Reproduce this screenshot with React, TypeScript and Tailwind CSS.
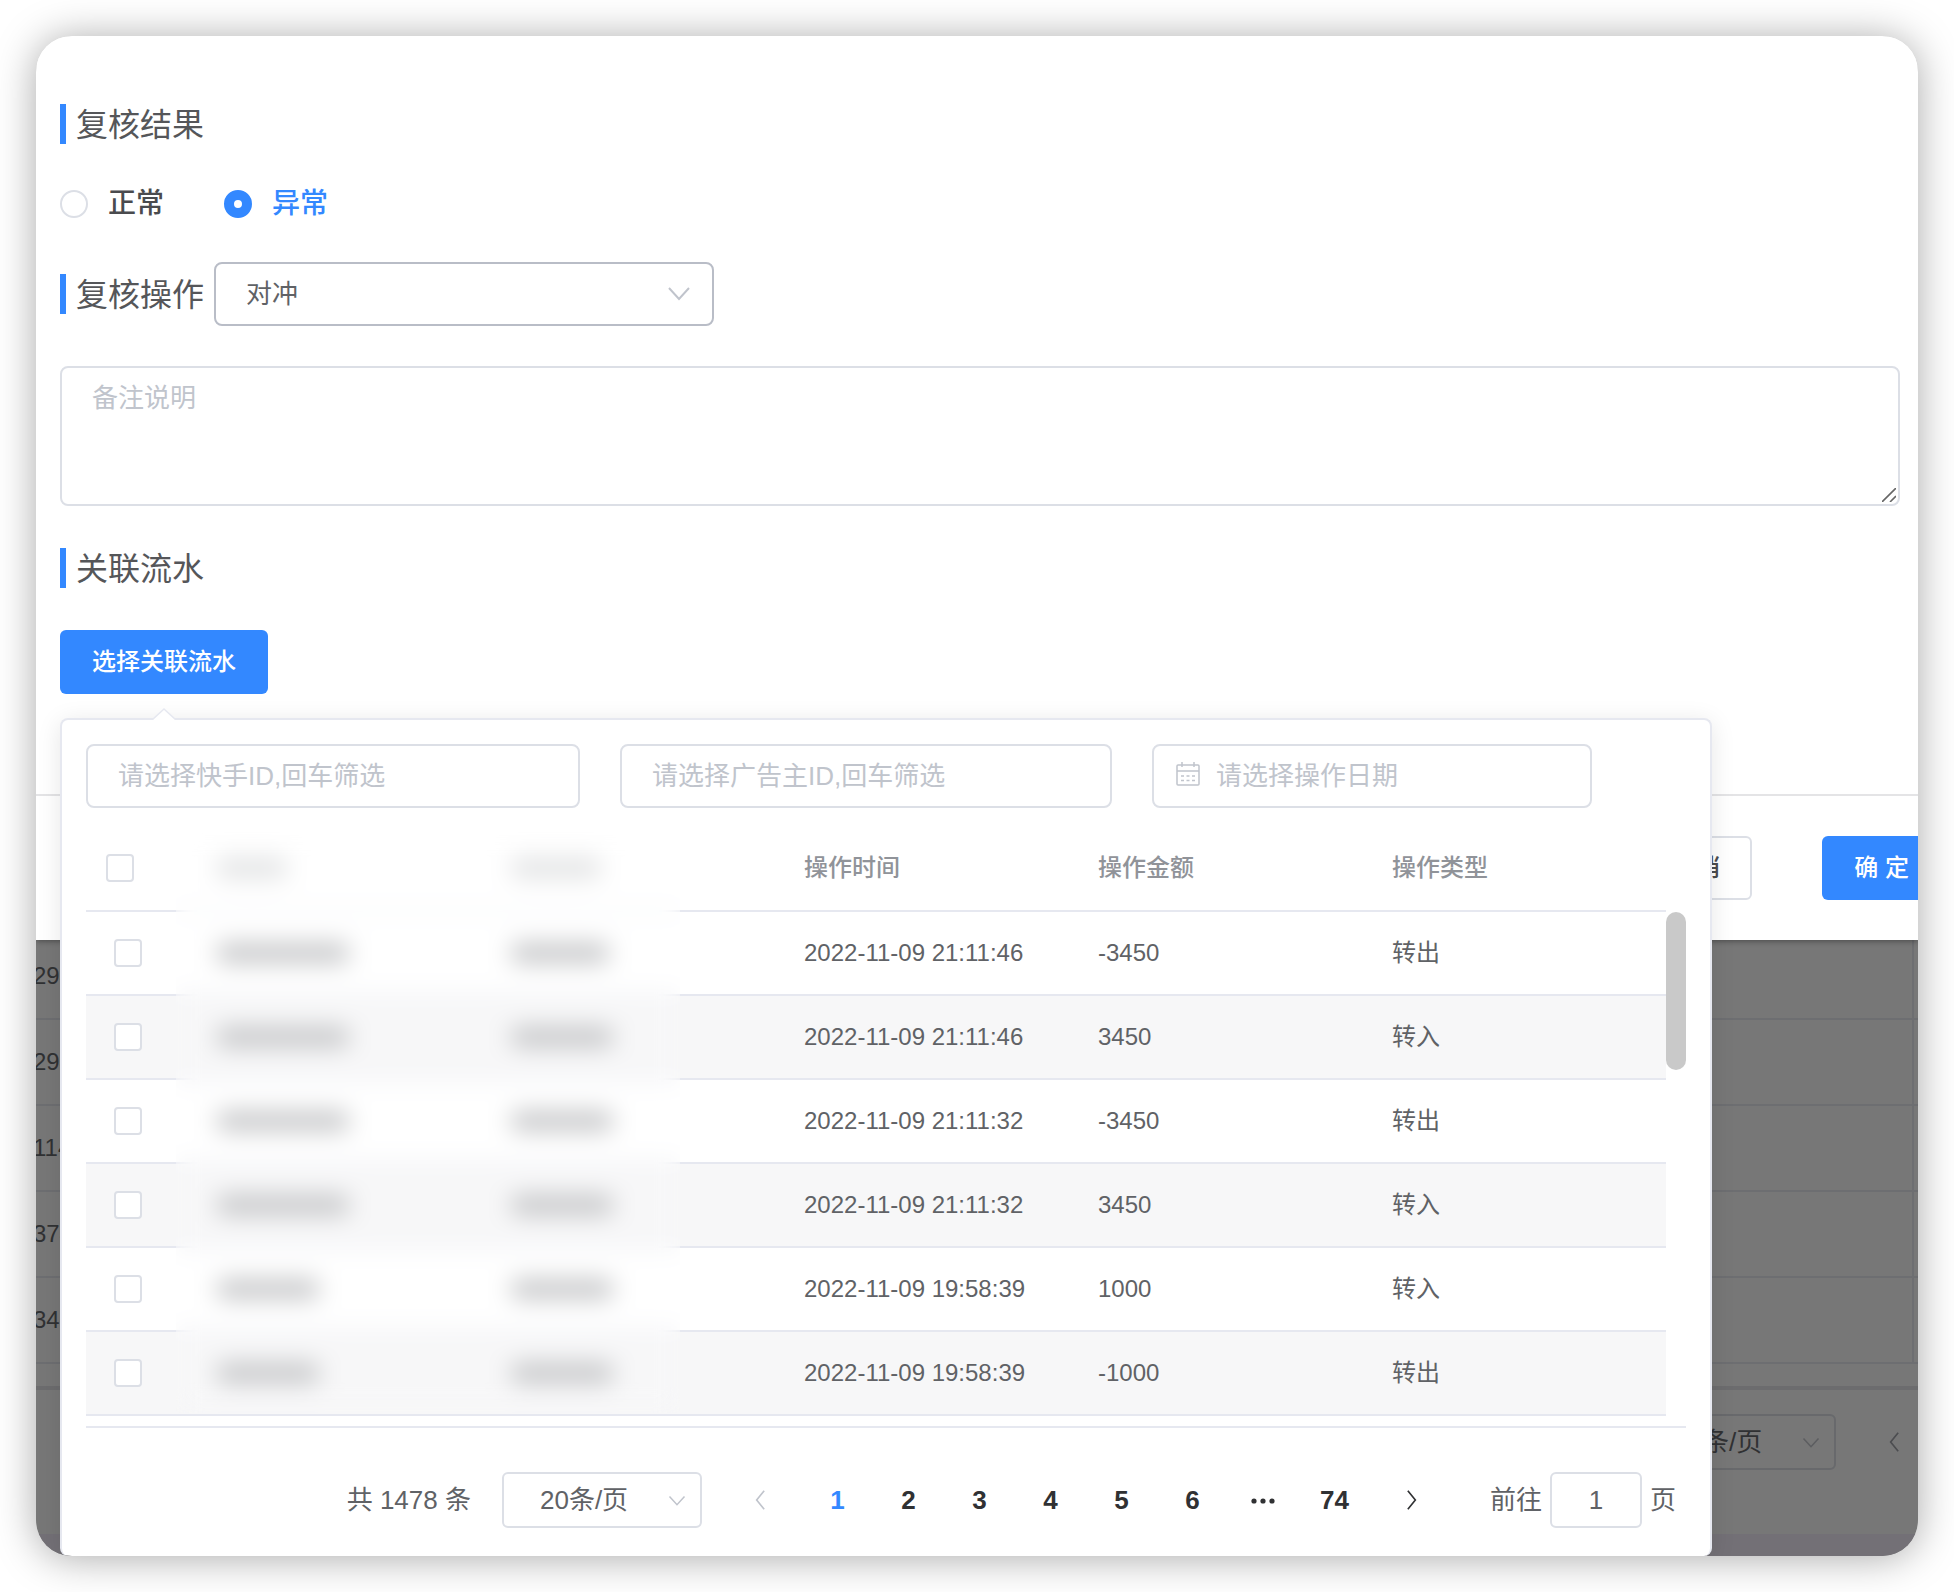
import React from "react";

type Flow = {
    time: string;
    amount: string;
    type: string;
    masks: string[];
};

const flows: Flow[] = [
    {time: "2022-11-09 21:11:46", amount: "-3450", type: "转出", masks: ["w-[134px]", "w-[100px]"]},
    {time: "2022-11-09 21:11:46", amount: "3450", type: "转入", masks: ["w-[134px]", "w-[104px]"]},
    {time: "2022-11-09 21:11:32", amount: "-3450", type: "转出", masks: ["w-[134px]", "w-[104px]"]},
    {time: "2022-11-09 21:11:32", amount: "3450", type: "转入", masks: ["w-[134px]", "w-[104px]"]},
    {time: "2022-11-09 19:58:39", amount: "1000", type: "转入", masks: ["w-[104px]", "w-[104px]"]},
    {time: "2022-11-09 19:58:39", amount: "-1000", type: "转出", masks: ["w-[104px]", "w-[104px]"]},
];

const pages = ["1", "2", "3", "4", "5", "6"];
const backRows = ["294", "294", "114", "374", "342"];

const Chevron = ({className, points}: { className: string; points: string }) => (
    <svg className={className} viewBox="0 0 24 24" fill="none" stroke="currentColor" strokeWidth="2">
        <polyline points={points}/>
    </svg>
);

const DOWN = "2,6 12,17 22,6";
const LEFT = "17,1 8,12 17,23";
const RIGHT = "7,1 16,12 7,23";

const SectionTitle = ({children}: { children: React.ReactNode }) => (
    <h2 className="flex h-10 items-center border-l-[6px] border-[#3388ff] pt-px pl-[10px] text-[32px] leading-10 whitespace-nowrap text-[#555659]">
        {children}
    </h2>
);

const RadioOption = ({label, checked}: { label: string; checked?: boolean }) => (
    <label className="flex h-7 items-center gap-5 text-[28px] font-medium text-[#4a4b4e] has-checked:text-[#3388ff]">
        <input
            type="radio"
            name="result"
            defaultChecked={checked}
            className="size-7 appearance-none rounded-full border-2 border-[#dcdfe6] bg-white checked:border-[10px] checked:border-[#3388ff]"
        />
        {label}
    </label>
);

const CheckBox = ({label}: { label: string }) => (
    <input
        type="checkbox"
        aria-label={label}
        className="block size-7 appearance-none rounded-[4px] border-2 border-[#dcdfe6] bg-white checked:bg-[#3388ff]"
    />
);

const CalendarIcon = () => (
    <svg className="pointer-events-none absolute top-[18px] left-6 size-6 text-[#c0c4cc]" viewBox="0 0 24 24" fill="none"
         stroke="currentColor" strokeWidth="1.5">
        <rect x="1" y="3" width="22" height="20" rx="1"/>
        <path d="M1 9h22M6 0v5M18 0v5"/>
        <path d="M5 14h3M10.500 14h3M16 14h3M5 18.500h3M10.500 18.500h3M16 18.500h3"/>
    </svg>
);

const ReviewForm = () => (
    <form className="relative bg-white shadow-[0_1px_6px_rgba(0,0,0,0.4)]">
        <div className="pt-[68px] pr-[18px] pb-[100px] pl-6">
            <SectionTitle>复核结果</SectionTitle>
            <div className="mt-[46px] flex gap-[60px]">
                <RadioOption label="正常"/>
                <RadioOption label="异常" checked/>
            </div>
            <div className="mt-11 flex items-center gap-[10px]">
                <SectionTitle>复核操作</SectionTitle>
                <div className="relative w-[500px]">
                    <select
                        aria-label="复核操作"
                        className="h-16 w-full appearance-none rounded-lg border-2 border-[#b9bdc7] bg-white px-[30px] text-[26px] text-[#606266]">
                        <option>对冲</option>
                    </select>
                    <Chevron className="pointer-events-none absolute top-5 right-[23px] size-6 text-[#c0c4cc]" points={DOWN}/>
                </div>
            </div>
            <div className="relative mt-10">
                <textarea
                    aria-label="备注说明"
                    placeholder="备注说明"
                    className="block h-[140px] w-full resize-none rounded-lg border-2 border-[#dcdfe6] px-[30px] py-[10px] text-[26px] leading-10 placeholder:text-[#c0c4cc]"
                />
                <svg className="pointer-events-none absolute right-1 bottom-1 size-[14px] text-[#666]" viewBox="0 0 14 14"
                     stroke="currentColor" strokeWidth="1.6">
                    <path d="M0 14L14 0M8 14L14 8"/>
                </svg>
            </div>
            <div className="mt-[42px]">
                <SectionTitle>关联流水</SectionTitle>
            </div>
            <button type="button" className="mt-[42px] block h-16 rounded-md bg-[#3388ff] px-8 text-2xl font-medium text-white">
                选择关联流水
            </button>
        </div>
        <div className="-mr-[23px] flex justify-end gap-[70px] border-t-2 border-[#e4e4e6] py-10">
            <button type="button" className="h-16 rounded-md border-2 border-[#dcdfe6] bg-white px-[30px] text-2xl font-medium text-[#4a4b4e]">
                取 消
            </button>
            <button type="submit" className="h-16 rounded-md bg-[#3388ff] px-8 text-2xl font-medium text-white">
                确 定
            </button>
        </div>
    </form>
);

/* list page under the modal mask */
const BackPage = () => (
    <div className="bg-[#777777] text-[#303133]">
        <div className="border-b-4 border-[#6c6c6e] pb-[22px]">
            <table className="-mt-[6px] w-full table-fixed border-separate border-spacing-0 text-2xl">
                <tbody>
                {backRows.map((id, i) => (
                    <tr key={i} className="h-[86px]">
                        <td className="border-r-2 border-b-2 border-[#6d6e71] p-0">
                            <span className="-ml-[3px]">{id}</span>
                        </td>
                        <td className="w-1 border-b-2 border-[#6d6e71] p-0"/>
                    </tr>
                ))}
                </tbody>
            </table>
        </div>
        <div className="flex items-center justify-end gap-12 pt-6 pr-[14px] pb-16">
            <div className="relative w-[200px]">
                <select
                    aria-label="每页条数"
                    className="h-14 w-full appearance-none rounded-md border-2 border-[#68696c] bg-transparent px-9 text-[26px]">
                    <option>20条/页</option>
                </select>
                <Chevron className="pointer-events-none absolute top-5 right-4 size-[18px] text-[#5c5d60]" points={DOWN}/>
            </div>
            <button type="button" aria-label="上一页">
                <Chevron className="size-5 text-[#4c4d50]" points={LEFT}/>
            </button>
        </div>
        <div className="h-[22px] bg-[#737076]"/>
    </div>
);

const Mask = ({className}: { className: string }) => (
    <div className={`h-5 rounded-full bg-[#c4c5c7] ${className}`}/>
);

const FlowTable = () => (
    <div className="mt-[18px] flex border-b-2 border-[#e6e8f0] pb-[10px]">
        <div className="relative flex-1">
            <table className="w-full table-fixed border-separate border-spacing-0 text-left text-2xl text-[#606266]">
                <thead>
                <tr className="h-[86px] text-[#909399] *:border-b-2 *:border-[#e6e8f0] *:py-0">
                    <th className="w-[110px] pl-5"><CheckBox label="全选"/></th>
                    <th className="px-5"><Mask className="w-[72px] opacity-50"/></th>
                    <th className="px-5"><Mask className="w-[92px] opacity-50"/></th>
                    <th className="px-5 font-medium">操作时间</th>
                    <th className="px-5 font-medium">操作金额</th>
                    <th className="px-5 font-medium">操作类型</th>
                </tr>
                </thead>
                <tbody>
                {flows.map((flow, i) => (
                    <tr key={i} className="h-[84px] *:border-b-2 *:border-[#e6e8f0] *:py-0 even:bg-[#f7f7f8]">
                        <td className="pl-7"><CheckBox label={`选择 ${flow.time}`}/></td>
                        {flow.masks.map((width, j) => (
                            <td key={j} className="px-5"><Mask className={width}/></td>
                        ))}
                        <td className="px-5 whitespace-nowrap">{flow.time}</td>
                        <td className="px-5">{flow.amount}</td>
                        <td className="px-5">{flow.type}</td>
                    </tr>
                ))}
                </tbody>
            </table>
            <div className="absolute top-0 bottom-[3px] left-[90px] w-[504px] backdrop-blur-[12px]"/>
        </div>
        <div className="w-5 pt-[86px]">
            <div className="h-[158px] rounded-full bg-[#c9c9c9]"/>
        </div>
    </div>
);

const Pagination = () => (
    <div className="mt-11 flex items-center justify-end pr-[10px] text-[26px] whitespace-nowrap text-[#606266]">
        <span>共 1478 条</span>
        <div className="relative ml-[31px] w-[200px]">
            <select
                aria-label="每页条数"
                className="h-14 w-full appearance-none rounded-md border-2 border-[#dcdfe6] bg-white px-9">
                <option>20条/页</option>
            </select>
            <Chevron className="pointer-events-none absolute top-5 right-4 size-[18px] text-[#c0c4cc]" points={DOWN}/>
        </div>
        <button type="button" disabled aria-label="上一页" className="ml-4 flex w-[84px] justify-center text-[#c0c4cc]">
            <Chevron className="size-5" points={LEFT}/>
        </button>
        {pages.map((page, i) => (
            <button key={page} type="button" className={`w-[71px] font-bold ${i === 0 ? "text-[#3388ff]" : "text-[#303133]"}`}>
                {page}
            </button>
        ))}
        <button type="button" aria-label="向后 5 页" className="flex w-[71px] justify-center text-[#303133]">
            <svg className="size-6" viewBox="0 0 24 24" fill="currentColor">
                <circle cx="3" cy="13" r="2.600"/>
                <circle cx="12" cy="13" r="2.600"/>
                <circle cx="21" cy="13" r="2.600"/>
            </svg>
        </button>
        <button type="button" className="w-[71px] font-bold text-[#303133]">74</button>
        <button type="button" aria-label="下一页" className="flex w-[84px] justify-center text-[#303133]">
            <Chevron className="size-5" points={RIGHT}/>
        </button>
        <label className="ml-9 flex items-center gap-2">
            前往
            <input type="text" defaultValue="1" className="h-14 w-[92px] rounded-md border-2 border-[#dcdfe6] text-center"/>
            页
        </label>
    </div>
);

const FlowPopover = () => (
    <div className="absolute top-[682px] right-[206px] left-6 rounded-lg border-2 border-b-0 border-[#e6e8f0] bg-white px-6 pt-6 pb-7 shadow-[0_4px_24px_rgba(0,0,0,0.1)]">
        <svg className="absolute -top-3 left-[90px] h-3 w-6" viewBox="0 0 24 12">
            <path d="M0 12L12 0L24 12Z" fill="#fff"/>
            <path d="M0 12L12 1L24 12" fill="none" stroke="#e6e8f0" strokeWidth="1.5"/>
        </svg>
        <div className="grid grid-cols-[494fr_492fr_440fr] gap-10 pr-[94px]">
            <input
                type="text"
                aria-label="快手ID"
                placeholder="请选择快手ID,回车筛选"
                className="h-16 min-w-0 rounded-lg border-2 border-[#dcdfe6] px-[30px] text-[26px] placeholder:text-[#c0c4cc]"
            />
            <input
                type="text"
                aria-label="广告主ID"
                placeholder="请选择广告主ID,回车筛选"
                className="h-16 min-w-0 rounded-lg border-2 border-[#dcdfe6] px-[30px] text-[26px] placeholder:text-[#c0c4cc]"
            />
            <div className="relative min-w-0">
                <CalendarIcon/>
                <input
                    type="text"
                    aria-label="操作日期"
                    placeholder="请选择操作日期"
                    className="h-16 w-full rounded-lg border-2 border-[#dcdfe6] pr-6 pl-[62px] text-[26px] placeholder:text-[#c0c4cc]"
                />
            </div>
        </div>
        <FlowTable/>
        <Pagination/>
    </div>
);

export default function App() {
    return (
        <div className="min-h-screen bg-white p-9 font-['Liberation_Sans','Noto_Sans_CJK_SC',sans-serif]">
            <div className="relative overflow-hidden rounded-[36px] shadow-[0_2px_40px_rgba(0,0,0,0.34)]">
                <ReviewForm/>
                <BackPage/>
                <FlowPopover/>
            </div>
        </div>
    );
}
